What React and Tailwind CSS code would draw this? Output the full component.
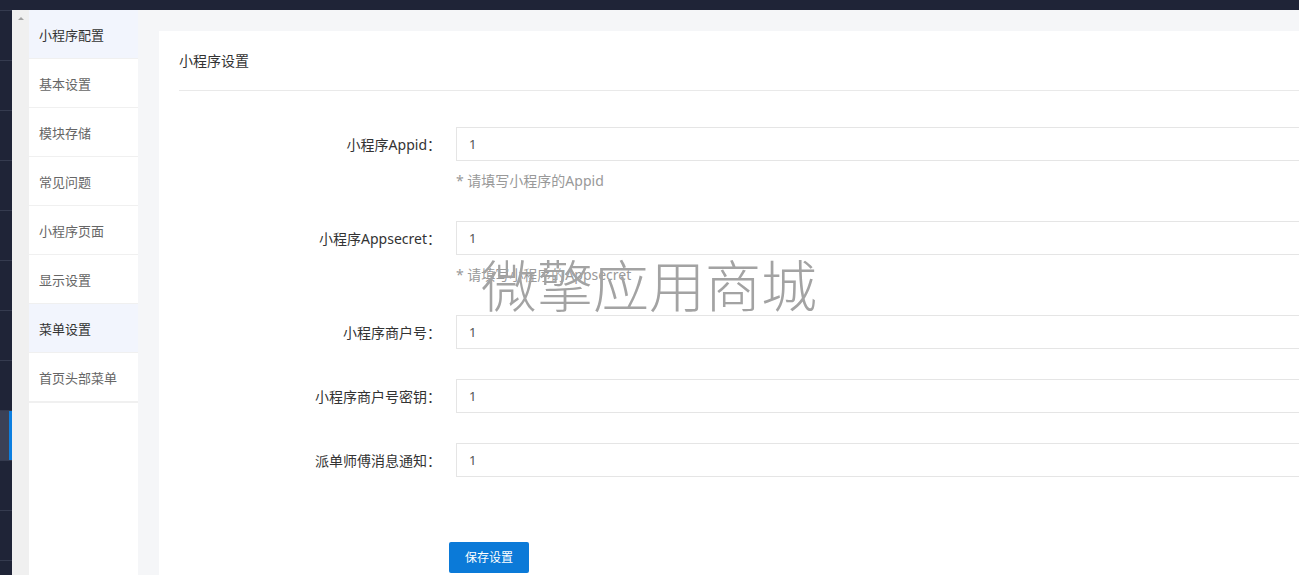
const menu = [
  { label: '小程序配置', active: true },
  { label: '基本设置' },
  { label: '模块存储' },
  { label: '常见问题' },
  { label: '小程序页面' },
  { label: '显示设置' },
  { label: '菜单设置', active: true },
  { label: '首页头部菜单' },
];

const fields = [
  { label: '小程序Appid：', value: '1', help: '* 请填写小程序的Appid' },
  { label: '小程序Appsecret：', value: '1', help: '* 请填写小程序的Appsecret' },
  { label: '小程序商户号：', value: '1' },
  { label: '小程序商户号密钥：', value: '1' },
  { label: '派单师傅消息通知：', value: '1' },
];

function FormRow({ label, value, help }) {
  return (
    <div className="mb-[30px] flex items-start">
      <label className="flex h-[34px] w-[262px] shrink-0 items-center justify-end text-[14px] text-[#333]">
        {label}
      </label>
      <div className="ml-[15px] flex flex-col">
        <input
          readOnly
          value={value}
          className="h-[34px] w-[900px] border border-[#e5e5e5] bg-white px-[12px] text-[13px] text-[#555] outline-none"
        />
        {help && <p className="mt-[10px] h-[20px] text-[14px] leading-[20px] text-[#999]">{help}</p>}
      </div>
    </div>
  );
}

export default function App() {
  return (
    <div
      className="relative flex h-[575px] w-[1299px] flex-col overflow-hidden bg-[#f5f6f8]"
      style={{ fontFamily: '"Noto Sans", "Noto Sans CJK SC", sans-serif' }}
    >
      <div className="h-[10px] shrink-0 bg-[#1f2437]" />
      <div className="flex min-h-0 flex-1">
        {/* collapsed main nav */}
        <div className="flex w-[12px] shrink-0 flex-col bg-[#1f2437]">
          {Array.from({ length: 12 }).map((_, i) => (
            <div
              key={i}
              className={
                i === 8
                  ? 'flex h-[50px] shrink-0 justify-end border-t border-[#353b4f] bg-[#3b4156]'
                  : 'h-[50px] shrink-0 border-t border-[#353b4f]'
              }
            >
              {i === 8 && <div className="h-full w-[3px] bg-[#0d7fe0]" />}
            </div>
          ))}
        </div>

        {/* scrollbar gutter */}
        <div className="flex w-[17px] shrink-0 justify-center bg-[#f0f0f0] pt-[7px]">
          <div className="h-0 w-0 border-x-[3.5px] border-b-[3.5px] border-x-transparent border-b-[#a3a3a3]" />
        </div>

        {/* sub menu */}
        <div className="flex w-[109px] shrink-0 flex-col bg-[#f0f0f0]">
          {menu.map((m) => (
            <div
              key={m.label}
              className={
                m.active
                  ? 'mb-px flex h-[48px] items-center bg-[#f2f5fd] pl-[10px] pt-[3px] text-[13px] text-[#333]'
                  : 'mb-px flex h-[48px] items-center bg-white pl-[10px] pt-[3px] text-[13px] text-[#666]'
              }
            >
              {m.label}
            </div>
          ))}
          <div className="mt-px flex-1 bg-white" />
        </div>

        {/* content */}
        <div className="min-w-0 flex-1 pl-[21px] pt-[21px]">
          <div className="h-full w-[1300px] bg-white">
            <div className="mx-[20px] flex h-[60px] items-center border-b border-[#e9e9e9] text-[14px] text-[#333]">
              小程序设置
            </div>
            <div className="pl-[20px] pt-[36px]">
              {fields.map((f) => (
                <FormRow key={f.label} {...f} />
              ))}
              <div className="pl-[270px] pt-[35px]">
                <button className="h-[31px] w-[80px] rounded-[2px] bg-[#0b7ad8] text-[12px] text-white">
                  保存设置
                </button>
              </div>
            </div>
          </div>
        </div>
      </div>

      {/* watermark */}
      <div
        className="pointer-events-none absolute left-[481px] top-[255px] text-[56px] font-light leading-none text-[#a3a3a3]"
        style={{ fontFamily: '"Noto Sans CJK SC", sans-serif' }}
      >
        微擎应用商城
      </div>
    </div>
  );
}
